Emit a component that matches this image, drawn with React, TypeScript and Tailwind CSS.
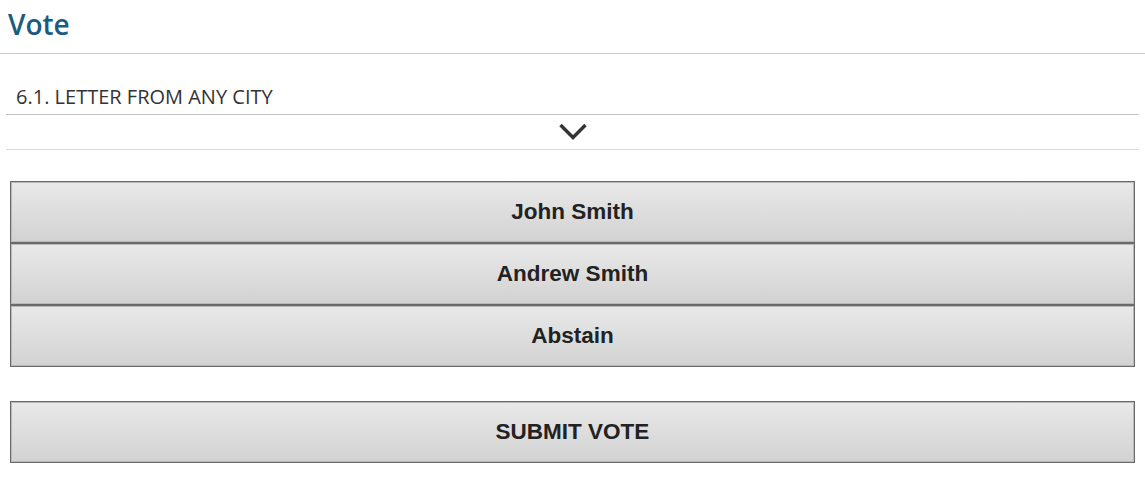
const candidates = ["John Smith", "Andrew Smith", "Abstain"]

function VoteButton({ label }: { label: string }) {
  return (
    <button
      type="button"
      className="w-full h-[62px] border border-[#6a6a6a] bg-linear-to-b from-[#e9e9e9] to-[#d2d2d2] shadow-[inset_0_0_0_1px_#b8b8b8] flex items-center justify-center text-[22.5px] font-bold text-[#222] font-['Liberation_Sans',Arial,sans-serif]"
    >
      {label}
    </button>
  )
}

export default function App() {
  return (
    <div className="w-[1145px] h-[479px] bg-white font-['Open_Sans',sans-serif] overflow-hidden">
      <header className="h-[54px] border-b border-[#c8c8c8] px-2 pt-[6px]">
        <h1 className="text-[28px] leading-[36px] font-semibold text-[#1b5a82]">Vote</h1>
      </header>

      <section className="mx-[6px]">
        <div className="h-[61px] border-b border-[#c4c4c4] flex items-end pl-[10px] pb-[5px]">
          <span className="text-[20px] leading-[24px] text-[#333]">6.1. LETTER FROM ANY CITY</span>
        </div>
        <div className="h-[35px] border-b border-[#dcdcdc] flex justify-center pt-[7px]">
          <svg width="28" height="19" viewBox="0 0 28 19" fill="none">
            <path d="M1.5 3 L14 15.5 L26.5 3" stroke="#333" strokeWidth="3.4" />
          </svg>
        </div>

        <div className="mx-1 mt-[31px] flex flex-col">
          {candidates.map((c) => (
            <VoteButton key={c} label={c} />
          ))}
        </div>

        <div className="mx-1 mt-[34px]">
          <VoteButton label="SUBMIT VOTE" />
        </div>
      </section>
    </div>
  )
}
